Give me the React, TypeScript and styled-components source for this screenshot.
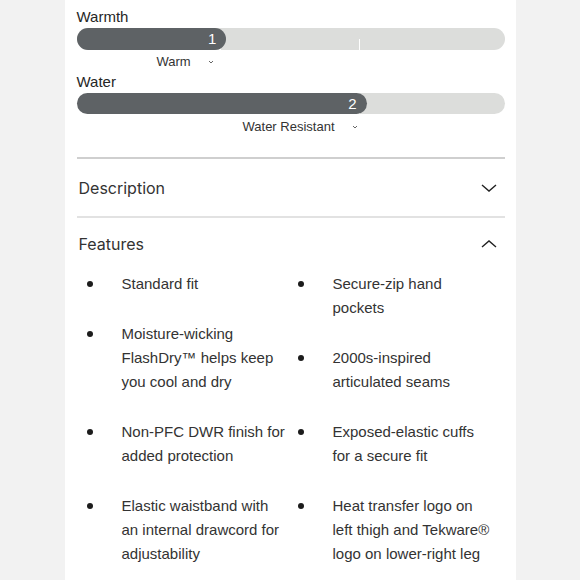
import styled, { createGlobalStyle } from 'styled-components';

const GlobalStyle = createGlobalStyle`
  html, body {
    margin: 0;
    padding: 0;
    background: #f2f2f2;
  }
  body {
    font-family: "Liberation Sans", Arial, sans-serif;
    color: #333;
  }
`;

const Panel = styled.div`
  width: 451px;
  min-height: 100vh;
  margin: 0 auto;
  box-sizing: border-box;
  padding: 8px 11px 0 12px;
  background: #fff;
`;

const Rating = styled.section`
  & + & {
    margin-top: 2.5px;
  }
`;

const RatingLabel = styled.div`
  font-size: 15px;
  line-height: 18px;
  color: #262626;
`;

const Track = styled.div`
  position: relative;
  margin-top: 2px;
  height: 21.5px;
  border-radius: 11px;
  background: #dcdddb;
`;

const Tick = styled.span`
  position: absolute;
  bottom: 0;
  width: 1.5px;
  height: 11px;
  background: #fff;
`;

const Fill = styled.div`
  position: relative;
  z-index: 1;
  height: 100%;
  box-sizing: border-box;
  border-radius: 11px;
  background: #5e6265;
  color: #fff;
  font-size: 15px;
  line-height: 21.5px;
  text-align: right;
  padding-right: 10px;
`;

const Caption = styled.div<{ $offset: number }>`
  display: flex;
  align-items: center;
  margin-top: 4.5px;
  padding-left: ${(p) => p.$offset}px;
  font-size: 13px;
  line-height: 16px;
  color: #333;

  svg {
    margin-left: 17px;
  }
`;

const Accordion = styled.div`
  margin-top: 22.5px;
`;

const Item = styled.div<{ $tone: string }>`
  border-top: 2px solid ${(p) => p.$tone};
`;

const ItemHeader = styled.div<{ $open?: boolean }>`
  display: flex;
  align-items: center;
  justify-content: space-between;
  height: ${(p) => (p.$open ? 52 : 57)}px;
  padding: 0 8px 0 2px;
  font-family: Inter, "Liberation Sans", sans-serif;
  font-size: 16px;
  color: #333;
`;

const Columns = styled.div`
  display: grid;
  grid-template-columns: 211px 204px;
  margin-top: 2px;
  padding-left: 13px;
  align-items: start;
`;

const List = styled.ul<{ $text: number }>`
  list-style: none;
  margin: 0;
  padding: 0;

  li {
    position: relative;
    width: ${(p) => p.$text}px;
    padding-left: 32px;
    font-size: 15px;
    line-height: 24px;
    color: #333;
  }
  li + li {
    margin-top: 26px;
  }
  li::before {
    content: '';
    position: absolute;
    left: -3px;
    top: 9px;
    width: 6px;
    height: 6px;
    border-radius: 50%;
    background: #1c1c1c;
  }
`;

const SmallChevron = () => (
  <svg width="6" height="4" viewBox="0 0 6 4">
    <path d="M1 1 L3 3 L5 1" fill="none" stroke="#666" strokeWidth="1" />
  </svg>
);

const Chevron = ({ up }: { up?: boolean }) => (
  <svg width="16" height="8" viewBox="0 0 16 8">
    <path
      d={up ? 'M1 7 L8 1 L15 7' : 'M1 1 L8 7 L15 1'}
      fill="none"
      stroke="#222"
      strokeWidth="1.4"
    />
  </svg>
);

const ratings = [
  { label: 'Warmth', value: 1, fill: 35, caption: 'Warm', offset: 80 },
  { label: 'Water', value: 2, fill: 67.8, caption: 'Water Resistant', offset: 166 },
];

const left = [
  'Standard fit',
  'Moisture-wicking FlashDry™ helps keep you cool and dry',
  'Non-PFC DWR finish for added protection',
  'Elastic waistband with an internal drawcord for adjustability',
];

const right = [
  'Secure-zip hand pockets',
  '2000s-inspired articulated seams',
  'Exposed-elastic cuffs for a secure fit',
  'Heat transfer logo on left thigh and Tekware® logo on lower-right leg',
];

const App = () => {
  return (
    <>
      <GlobalStyle />
      <Panel>
        {ratings.map((r) => (
          <Rating key={r.label}>
            <RatingLabel>{r.label}</RatingLabel>
            <Track>
              <Tick style={{ left: '33.3%' }} />
              <Tick style={{ left: '66%' }} />
              <Fill style={{ width: `${r.fill}%` }}>{r.value}</Fill>
            </Track>
            <Caption $offset={r.offset}>
              {r.caption}
              <SmallChevron />
            </Caption>
          </Rating>
        ))}
        <Accordion>
          <Item $tone="#cfcfcf">
            <ItemHeader>
              Description
              <Chevron />
            </ItemHeader>
          </Item>
          <Item $tone="#e2e2e2">
            <ItemHeader $open>
              Features
              <Chevron up />
            </ItemHeader>
            <Columns>
              <List $text={165}>
                {left.map((t) => (
                  <li key={t}>{t}</li>
                ))}
              </List>
              <List $text={161}>
                {right.map((t) => (
                  <li key={t}>{t}</li>
                ))}
              </List>
            </Columns>
          </Item>
        </Accordion>
      </Panel>
    </>
  );
};

export default App;
